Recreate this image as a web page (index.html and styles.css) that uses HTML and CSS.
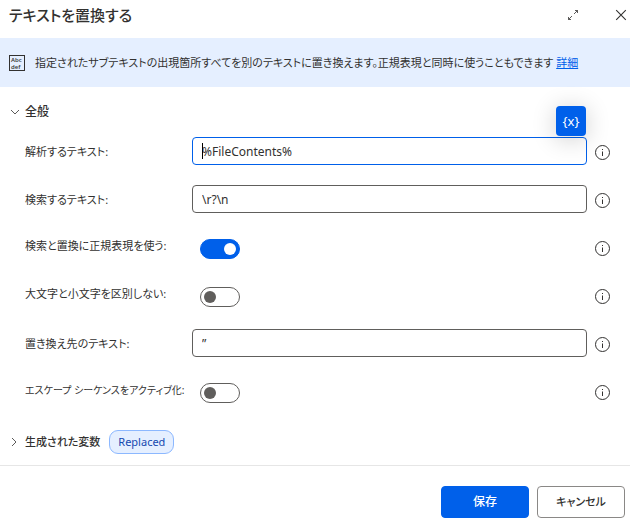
FILE: index.html
```html
<!DOCTYPE html>
<html lang="ja">
<head>
<meta charset="utf-8">
<meta name="viewport" content="width=device-width, initial-scale=1">
<title>テキストを置換する</title>
<link rel="stylesheet" href="styles.css">
</head>
<body>
<svg class="sprite" aria-hidden="true">
  <symbol id="info" viewBox="0 0 16 16">
    <circle cx="7.500" cy="7.500" r="7" fill="none" stroke="currentColor"/>
    <path d="M7.500 6.500v4.500M7.500 4v1" stroke="currentColor"/>
  </symbol>
</svg>
<main class="dialog">
  <header class="titlebar">
    <h1 class="title">テキストを置換する</h1>
    <button class="icon-button" type="button" aria-label="展開">
      <svg width="12" height="12" viewBox="0 0 12 12" fill="none" stroke="currentColor" stroke-width=".8"><path d="M7 5l3.500-3.500M8 1.500h2.500v2.500M5 7l-3.500 3.500M1.500 8v2.500h2.500"/></svg>
    </button>
    <button class="icon-button" type="button" aria-label="閉じる">
      <svg width="12" height="12" viewBox="0 0 12 12" fill="none" stroke="currentColor" stroke-width="1.1"><path d="M1.200 1.200l9.600 9.600M10.800 1.200l-9.600 9.600"/></svg>
    </button>
  </header>

  <section class="banner">
    <svg class="banner-icon" width="16" height="16" viewBox="0 0 16 16" aria-hidden="true">
      <rect x=".5" y=".5" width="15" height="15" fill="none" stroke="currentColor"/>
      <text class="icon-text" x="2" y="7">Abc</text>
      <text class="icon-text" x="2" y="14">def</text>
    </svg>
    <p class="banner-text">指定されたサブテキストの出現箇所すべてを別のテキストに置き換えます。正規表現と同時に使うこともできます <a class="link" href="#">詳細</a></p>
  </section>

  <form class="form">
    <div class="body">
      <button class="group" type="button" aria-expanded="true">
        <svg width="10" height="10" viewBox="0 0 10 10" fill="none" stroke="currentColor" stroke-width=".8"><path d="M1 3l4 4 4-4"/></svg>
        <span>全般</span>
      </button>

      <div class="row">
        <label class="label" for="source">解析するテキスト:</label>
        <div class="field">
          <input class="text active" id="source" type="text" value="%FileContents%" autocomplete="off">
          <span class="caret"></span>
          <button class="variable" type="button" aria-label="変数の選択">{x}</button>
        </div>
        <button class="info" type="button" aria-label="情報"><svg width="16" height="16"><use href="#info"/></svg></button>
      </div>
      <div class="row">
        <label class="label" for="find">検索するテキスト:</label>
        <div class="field"><input class="text" id="find" type="text" value="\r?\n" autocomplete="off"></div>
        <button class="info" type="button" aria-label="情報"><svg width="16" height="16"><use href="#info"/></svg></button>
      </div>
      <div class="row toggle-row">
        <label class="label" for="regex">検索と置換に正規表現を使う:</label>
        <div class="field"><input class="switch" id="regex" type="checkbox" role="switch" checked></div>
        <button class="info" type="button" aria-label="情報"><svg width="16" height="16"><use href="#info"/></svg></button>
      </div>
      <div class="row toggle-row">
        <label class="label" for="case">大文字と小文字を区別しない:</label>
        <div class="field"><input class="switch" id="case" type="checkbox" role="switch"></div>
        <button class="info" type="button" aria-label="情報"><svg width="16" height="16"><use href="#info"/></svg></button>
      </div>
      <div class="row">
        <label class="label" for="replace">置き換え先のテキスト:</label>
        <div class="field"><input class="text" id="replace" type="text" value="”" autocomplete="off"></div>
        <button class="info" type="button" aria-label="情報"><svg width="16" height="16"><use href="#info"/></svg></button>
      </div>
      <div class="row toggle-row">
        <label class="label long" for="escape">エスケープ シーケンスをアクティブ化:</label>
        <div class="field"><input class="switch" id="escape" type="checkbox" role="switch"></div>
        <button class="info" type="button" aria-label="情報"><svg width="16" height="16"><use href="#info"/></svg></button>
      </div>

      <div class="outputs">
        <button class="group" type="button" aria-expanded="false">
          <svg width="10" height="10" viewBox="0 0 10 10" fill="none" stroke="currentColor" stroke-width=".8"><path d="M2 1l4 4-4 4"/></svg>
          <span>生成された変数</span>
        </button>
        <span class="chip">Replaced</span>
      </div>
    </div>

    <footer class="footer">
      <button class="button primary" type="submit">保存</button>
      <button class="button" type="button">キャンセル</button>
    </footer>
  </form>
</main>
</body>
</html>
```

FILE: styles.css
```css
* {
  box-sizing: border-box;
}

body {
  margin: 0;
  background: #fff;
  color: #323130;
  font: 12px/16px "Noto Sans", "Noto Sans CJK JP", sans-serif;
  font-feature-settings: "palt";
}

button,
input {
  margin: 0;
  color: inherit;
  font: inherit;
  font-feature-settings: inherit;
}

svg {
  display: block;
}

.sprite {
  display: none;
}

.titlebar {
  display: flex;
  align-items: center;
  gap: 20px;
  height: 38px;
  padding: 0 0 8px 9px;
}

.title {
  flex: 1;
  margin: 0;
  font-size: 15px;
  line-height: 24px;
  font-weight: 500;
}

.icon-button,
.info,
.group {
  padding: 0;
  border: 0;
  background: none;
}

.icon-button {
  display: grid;
  place-items: center;
  width: 28px;
  height: 28px;
}

.titlebar .icon-button:last-child {
  margin-right: -5px;
}

.banner {
  display: flex;
  align-items: center;
  gap: 10px;
  min-height: 49px;
  padding: 0 9px;
  background: #e5efff;
}

.banner-icon {
  flex: none;
}

.icon-text {
  fill: currentColor;
  font: 600 6px "Open Sans", sans-serif;
}

.banner-text {
  margin: 0;
  font-size: 11px;
}

.link {
  color: #0060ea;
}

.body {
  padding: 17px 0 11px 10px;
}

.group {
  display: flex;
  align-items: center;
  gap: 5px;
  font-weight: 500;
}

.row {
  display: grid;
  grid-template-columns: 167px 1fr 43px;
  align-items: center;
  height: 48px;
  padding-left: 15px;
}

.group + .row {
  margin-top: 7px;
}

.label {
  padding-top: 2px;
  font-size: 11px;
  white-space: nowrap;
}

.label.long {
  font-size: 10px;
}

.toggle-row .label {
  padding: 0 0 5px;
}

.toggle-row {
  padding-top: 3px;
}

.field {
  position: relative;
  display: flex;
}

.text {
  width: 100%;
  height: 28px;
  padding: 0 9px;
  border: 1px solid #605e5c;
  border-radius: 4px;
  background: #fff;
  outline: 0;
}

.text.active {
  border-color: #0060ea;
}

.caret {
  position: absolute;
  top: 6px;
  left: 10px;
  width: 1px;
  height: 16px;
  background: #000;
}

.variable {
  position: absolute;
  right: 1px;
  bottom: 29px;
  width: 30px;
  height: 30px;
  padding: 0;
  border: 0;
  border-radius: 4px;
  background: #0060ea;
  box-shadow: 0 3px 24px rgba(0, 0, 0, 0.2);
  color: #fff;
  font-size: 13px;
}

.info {
  width: 16px;
  height: 20px;
  padding-top: 4px;
  margin-left: 8px;
}

.toggle-row .info {
  height: 16px;
  padding-top: 0;
}

.switch {
  appearance: none;
  display: flex;
  align-items: center;
  width: 40px;
  height: 20px;
  margin-left: 8px;
  padding: 0 3px;
  border: 1px solid #605e5c;
  border-radius: 10px;
}

.switch::before {
  content: "";
  width: 12px;
  height: 12px;
  border-radius: 50%;
  background: #605e5c;
}

.switch:checked {
  justify-content: flex-end;
  border-color: #0060ea;
  background: #0060ea;
}

.switch:checked::before {
  background: #fff;
}

.outputs {
  display: flex;
  align-items: center;
  gap: 9px;
  margin-top: 15px;
}

.outputs .group {
  font-size: 11px;
}

.chip {
  padding: 3px 8px;
  border: 1px solid #8cb8ff;
  border-radius: 9px;
  background: #e5efff;
  color: #1549b0;
  font-size: 11px;
}

.footer {
  display: flex;
  justify-content: flex-end;
  gap: 8px;
  padding: 20px 5px 14px;
  border-top: 1px solid #e6e6e6;
}

.button {
  width: 88px;
  height: 32px;
  padding: 0;
  border: 1px solid #8a8886;
  border-radius: 4px;
  background: #fff;
  font-size: 11px;
  font-weight: 500;
}

.primary {
  border-color: #0060ea;
  background: #0060ea;
  color: #fff;
  font-size: 12px;
}
```
